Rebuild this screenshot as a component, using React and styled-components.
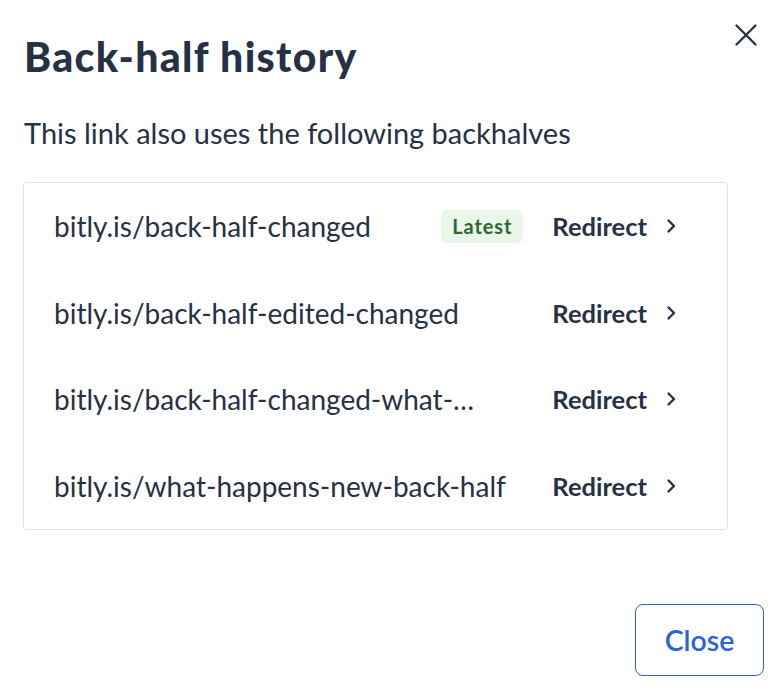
import styled, { createGlobalStyle } from "styled-components";

const Global = createGlobalStyle`
  body {
    margin: 0;
    background: #fff;
    font-family: Lato, "Liberation Sans", sans-serif;
    color: #273144;
  }
`;

const Modal = styled.div`
  width: 780px;
  height: 694px;
  box-sizing: border-box;
  padding: 24px 16px 18px 24px;
  display: flex;
  flex-direction: column;
`;

const Header = styled.div`
  display: flex;
  justify-content: space-between;
  align-items: flex-start;
`;

const Title = styled.h1`
  margin: 9px 0 0;
  font-size: 41px;
  font-weight: 900;
  line-height: 48px;
  letter-spacing: 1.3px;
  color: #273144;
`;

const CloseIcon = styled.button`
  border: none;
  background: none;
  padding: 0;
  margin: 0 7px 0 0;
  width: 22px;
  height: 22px;
  color: #273144;
  cursor: pointer;

  svg {
    display: block;
  }
`;

const Subtitle = styled.p`
  margin: 34px 0 0;
  font-size: 29px;
  line-height: 36px;
`;

const Card = styled.div`
  margin: 31px 36px 0 -1px;
  border: 1px solid #dfe3ea;
  border-radius: 4px;
`;

const Row = styled.div`
  display: flex;
  align-items: center;
  height: 86.5px;
  padding: 0 51px 0 30px;
`;

const Url = styled.span`
  flex: 1;
  font-size: 28px;
  white-space: nowrap;
  overflow: hidden;
  text-overflow: ellipsis;
`;

const Badge = styled.span`
  background: #e8f7ea;
  color: #2b6a2f;
  font-weight: 700;
  font-size: 20px;
  line-height: 33px;
  letter-spacing: 0.9px;
  padding: 0 11px;
  border-radius: 6px;
  margin-right: 29px;
`;

const Redirect = styled.a`
  display: flex;
  align-items: center;
  gap: 19px;
  font-size: 25.5px;
  font-weight: 700;
  color: #273144;
  text-decoration: none;

  svg {
    display: block;
  }
`;

const Footer = styled.div`
  margin-top: auto;
  display: flex;
  justify-content: flex-end;
`;

const Button = styled.button`
  width: 129px;
  height: 72px;
  border: 1.5px solid #2e62d8;
  border-radius: 8px;
  background: #fff;
  color: #2e62d8;
  font-family: Lato, "Liberation Sans", sans-serif;
  font-size: 28.5px;
  font-weight: 600;
`;

const rows = [
  { url: "bitly.is/back-half-changed", latest: true },
  { url: "bitly.is/back-half-edited-changed" },
  { url: "bitly.is/back-half-changed-what-…" },
  { url: "bitly.is/what-happens-new-back-half" },
];

function Chevron() {
  return (
    <svg width="10" height="16" viewBox="0 0 10 16" fill="none" stroke="currentColor" strokeWidth="2.4" strokeLinecap="round" strokeLinejoin="round">
      <path d="M2.5 2.5l5.5 5.5-5.5 5.5" />
    </svg>
  );
}

export default function App() {
  return (
    <>
      <Global />
      <Modal>
        <Header>
          <Title>Back-half history</Title>
          <CloseIcon aria-label="Close">
            <svg width="22" height="22" viewBox="0 0 22 22" fill="none" stroke="currentColor" strokeWidth="2.3" strokeLinecap="round">
              <path d="M1.5 1.5l19 19M20.5 1.5l-19 19" />
            </svg>
          </CloseIcon>
        </Header>
        <Subtitle>This link also uses the following backhalves</Subtitle>
        <Card>
          {rows.map((r) => (
            <Row key={r.url}>
              <Url>{r.url}</Url>
              {r.latest && <Badge>Latest</Badge>}
              <Redirect href="#">
                Redirect
                <Chevron />
              </Redirect>
            </Row>
          ))}
        </Card>
        <Footer>
          <Button>Close</Button>
        </Footer>
      </Modal>
    </>
  );
}
